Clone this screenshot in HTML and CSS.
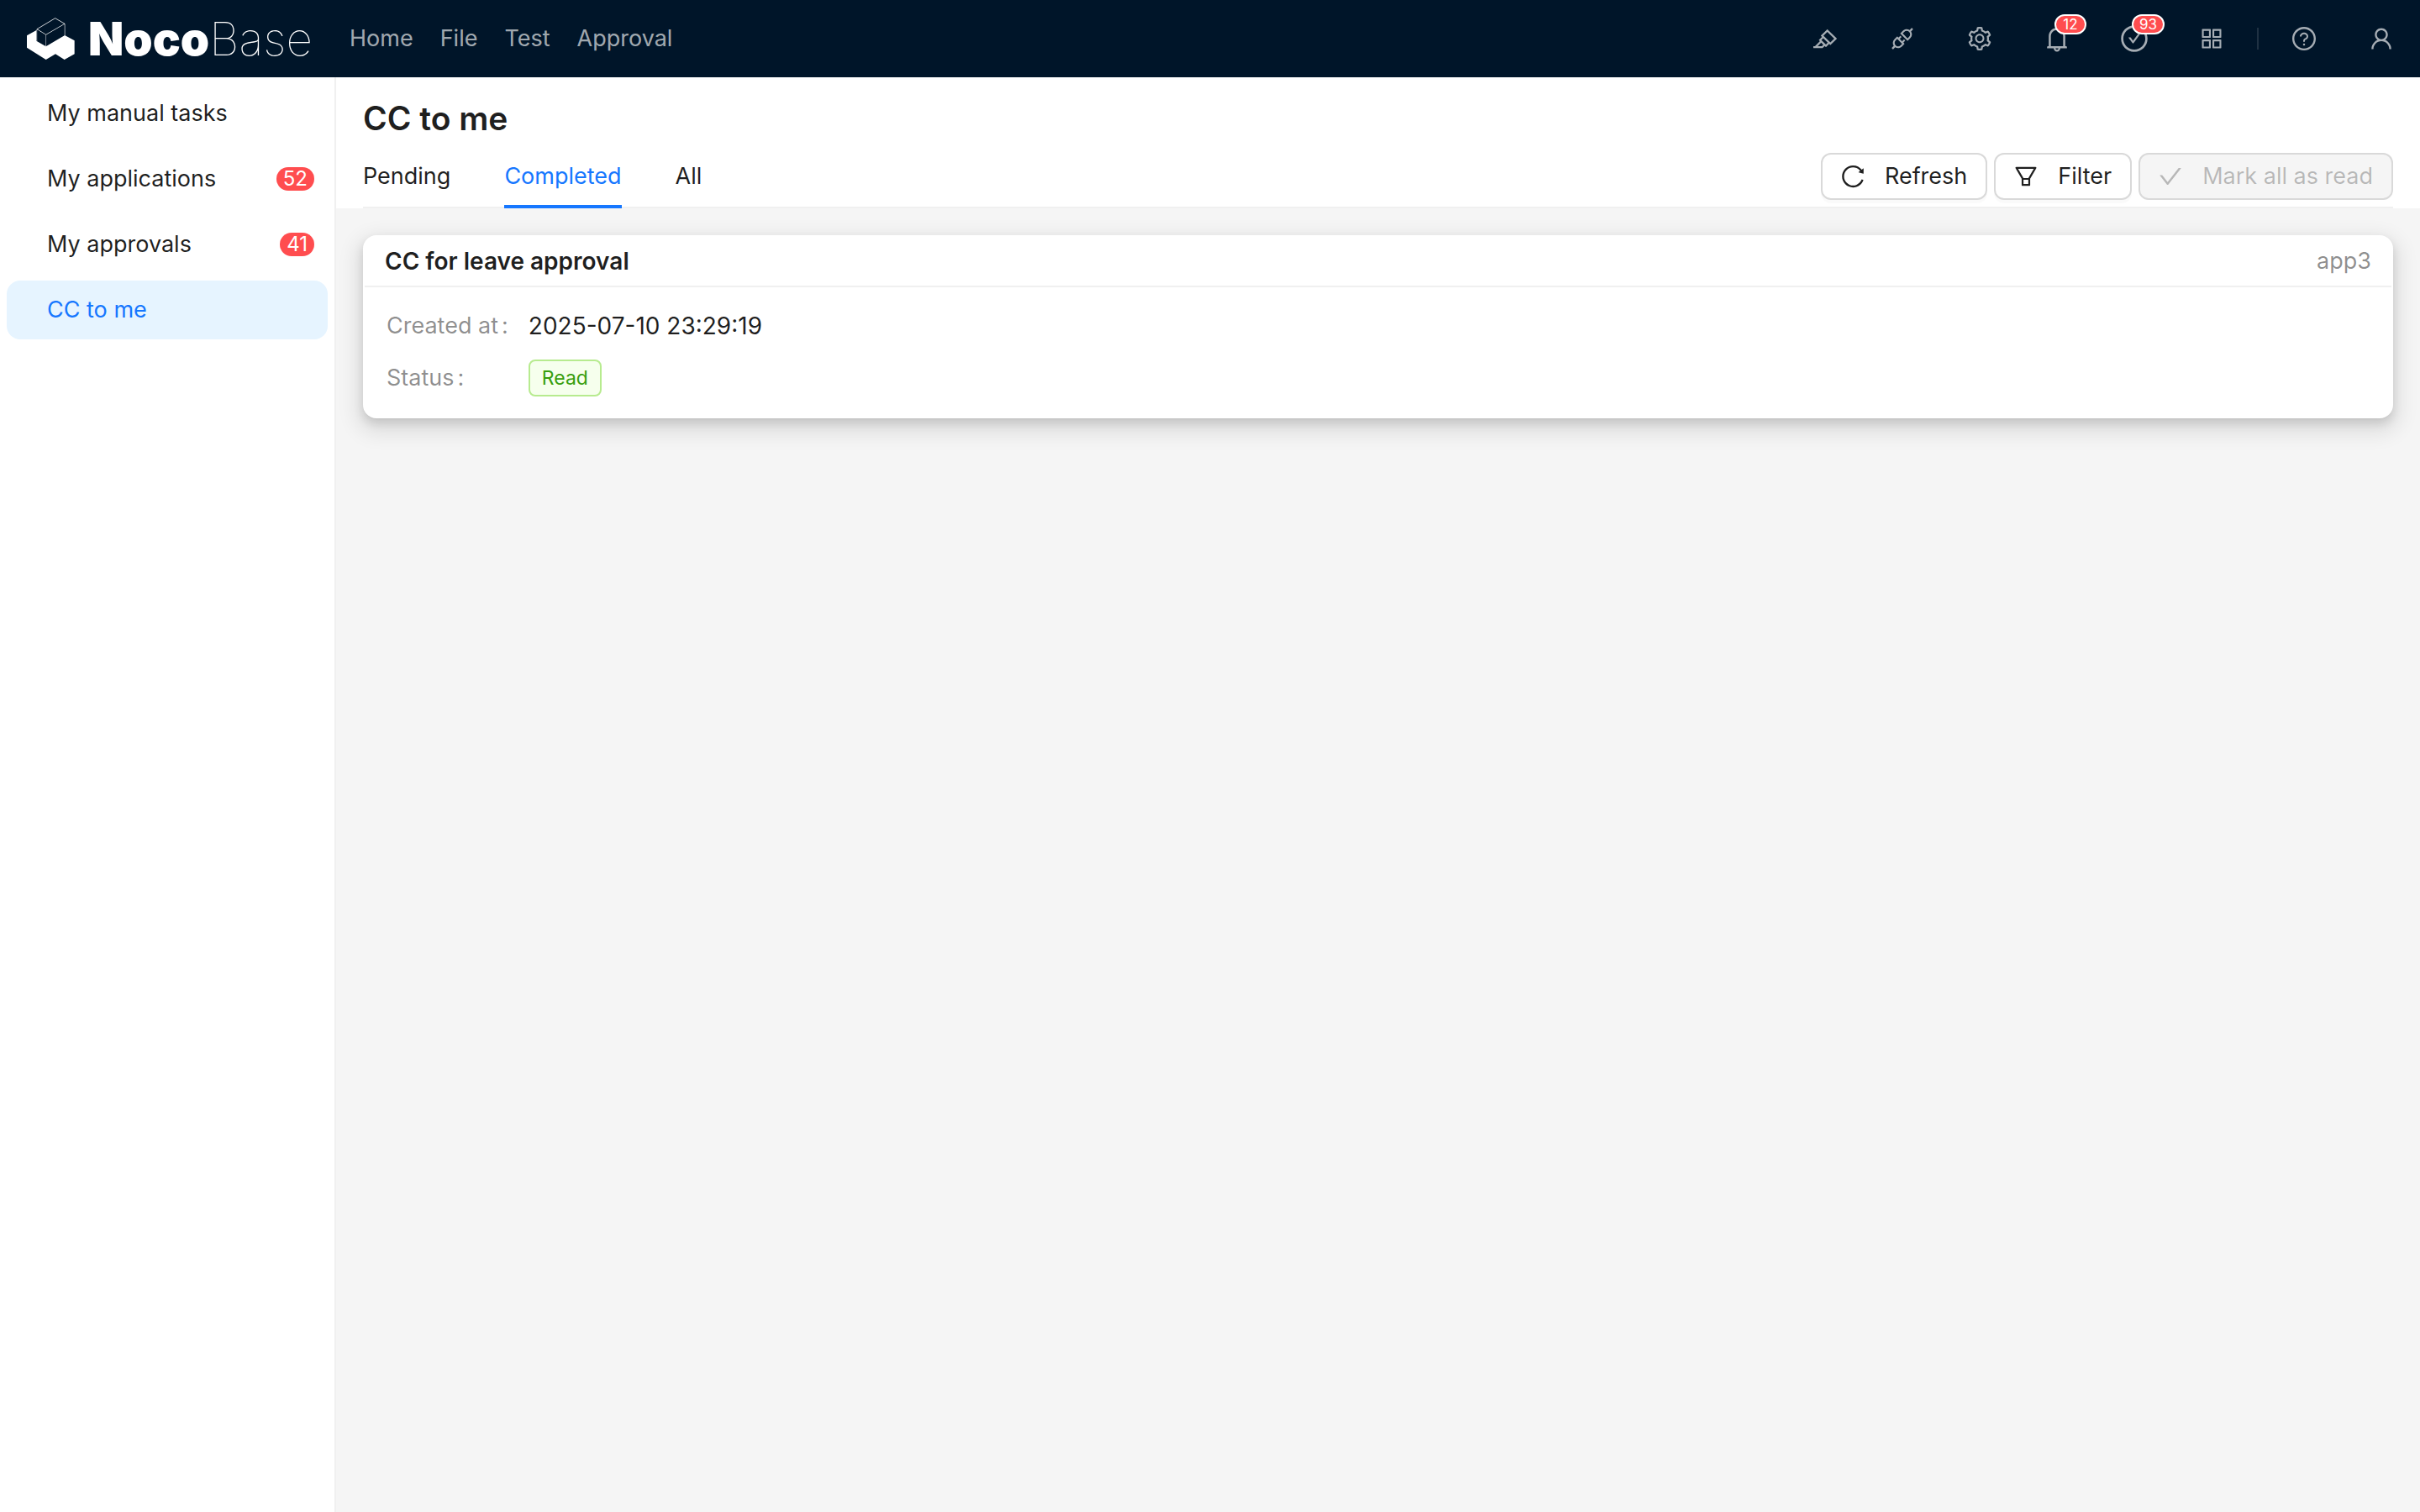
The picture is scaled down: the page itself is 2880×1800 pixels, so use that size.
FILE: index.html
```
<!DOCTYPE html>
<html lang="en">
<head>
    <meta charset="UTF-8">
    <meta name="viewport" content="width=device-width, initial-scale=1.0">
    <title>CC to me - NocoBase</title>
    <link rel="stylesheet" href="styles.css">
</head>
<body>
    <header class="header">
        <a class="logo" href="#">
            <svg class="logo-mark" viewBox="96 63 171 150">
                <path fill="#fff" d="M130 108L96 127v43l68 43 34-20 32 20 36-20v-48l-35-19-67 40-34-20z"/>
                <path fill="none" stroke="#fff" stroke-width="3" stroke-linejoin="round" d="M132 104l65-39 34 20v42M132 104l32 20 67-39M132 104v42M164 124v42" opacity=".8"/>
                <path fill="#001529" d="M133 107l30 18v38l-30-18zM165.500 125.500L229.500 88v38L165.500 163z"/>
            </svg>
            <span class="logo-text"><b>Noco</b><i>Base</i></span>
        </a>
        <nav class="nav">
            <a href="#">Home</a>
            <a href="#">File</a>
            <a href="#">Test</a>
            <a href="#">Approval</a>
        </nav>
        <div class="actions">
            <button type="button" aria-label="UI editor">
                <svg class="icon" viewBox="0 0 1024 1024"><path d="M957.6 507.4L603.2 158.2a7.9 7.9 0 00-11.2 0L353.3 393.4a8.03 8.03 0 00-.1 11.3l.1.1 40 39.4-117.2 115.3a8.03 8.03 0 00-.1 11.3l.1.1 39.5 38.9-189.1 187H72.1c-4.4 0-8.1 3.6-8.1 8V860c0 4.4 3.6 8 8 8h344.9c2.1 0 4.1-.8 5.6-2.3l76.1-75.6 40.4 39.8a7.9 7.9 0 0011.2 0l117.1-115.6 40.1 39.5a7.9 7.9 0 0011.2 0l238.7-235.2c3.4-3 3.4-8 .3-11.2zM389.8 796.2H229.6l134.4-133 80.1 78.9-54.3 54.1zm154.8-62.1L373.2 565.2l68.6-67.6 171.4 168.9-68.6 67.6zM713.1 658L450.3 399.1 597.6 254l262.8 259-147.3 145z"/></svg>
            </button>
            <button type="button" aria-label="Plugin manager">
                <svg class="icon" viewBox="0 0 1024 1024"><path d="M917.7 148.8l-42.4-42.4c-1.6-1.6-3.6-2.3-5.7-2.3s-4.1.8-5.7 2.3l-76.1 76.1a199.27 199.27 0 00-112.1-34.3c-51.2 0-102.4 19.5-141.5 58.6L432.3 308.7a8.03 8.03 0 000 11.3L704 591.7c1.6 1.6 3.6 2.3 5.7 2.3 2 0 4.1-.8 5.7-2.3l101.9-101.9c68.9-69 77-175.7 24.3-253.5l76.1-76.1c3.1-3.2 3.1-8.3 0-11.4zM769.1 441.7l-59.4 59.4-186.8-186.8 59.4-59.4c24.9-24.9 58.1-38.7 93.4-38.7 35.3 0 68.4 13.7 93.4 38.7 24.9 24.9 38.7 58.1 38.7 93.4 0 35.3-13.8 68.4-38.7 93.4zm-190.2 105a8.03 8.03 0 00-11.3 0L501 613.3 410.7 523l66.7-66.7c3.1-3.1 3.1-8.2 0-11.3L441 408.6a8.03 8.03 0 00-11.3 0L363 475.3l-43-43a7.85 7.85 0 00-5.7-2.3c-2 0-4.1.8-5.7 2.3L206.8 534.2c-68.9 69-77 175.7-24.3 253.5l-76.1 76.1a8.03 8.03 0 000 11.3l42.4 42.4c1.6 1.6 3.6 2.3 5.7 2.3s4.1-.8 5.7-2.3l76.1-76.1c33.7 22.9 72.9 34.3 112.1 34.3 51.2 0 102.4-19.5 141.5-58.6l101.9-101.9c3.1-3.1 3.1-8.2 0-11.3l-43-43 66.7-66.7c3.1-3.1 3.1-8.2 0-11.3l-36.6-36.2zM441.7 769.1a131.32 131.32 0 01-93.4 38.7c-35.3 0-68.4-13.7-93.4-38.7a131.32 131.32 0 01-38.7-93.4c0-35.3 13.7-68.4 38.7-93.4l59.4-59.4 186.8 186.8-59.4 59.4z"/></svg>
            </button>
            <button type="button" aria-label="Settings">
                <svg class="icon" viewBox="0 0 1024 1024"><path d="M924.8 625.7l-65.5-56c3.1-19 4.7-38.4 4.7-57.8s-1.6-38.8-4.7-57.8l65.5-56a32.03 32.03 0 009.3-35.2l-.9-2.6a443.74 443.74 0 00-79.7-137.9l-1.8-2.1a32.12 32.12 0 00-35.1-9.5l-81.3 28.9c-30-24.6-63.5-44-99.7-57.6l-15.7-85a32.05 32.05 0 00-25.8-25.7l-2.7-.5c-52.1-9.4-106.9-9.4-159 0l-2.7.5a32.05 32.05 0 00-25.8 25.7l-15.8 85.4a351.86 351.86 0 00-99 57.4l-81.9-29.1a32 32 0 00-35.1 9.5l-1.8 2.1a446.02 446.02 0 00-79.7 137.9l-.9 2.6c-4.5 12.5-.8 26.5 9.3 35.2l66.3 56.6c-3.1 18.8-4.6 38-4.6 57.1 0 19.2 1.5 38.4 4.6 57.1L99 625.5a32.03 32.03 0 00-9.3 35.2l.9 2.6c18.1 50.4 44.9 96.9 79.7 137.9l1.8 2.1a32.12 32.12 0 0035.1 9.5l81.9-29.1c29.8 24.5 63.1 43.9 99 57.4l15.8 85.4a32.05 32.05 0 0025.8 25.7l2.7.5a449.4 449.4 0 00159 0l2.7-.5a32.05 32.05 0 0025.8-25.7l15.7-85a350 350 0 0099.7-57.6l81.3 28.9a32 32 0 0035.1-9.5l1.8-2.1c34.8-41.1 61.6-87.5 79.7-137.9l.9-2.6c4.5-12.3.8-26.3-9.3-35zM788.3 465.9c2.5 15.1 3.8 30.6 3.8 46.1s-1.3 31-3.8 46.1l-6.6 40.1 74.7 63.9a370.03 370.03 0 01-42.6 73.6L721 702.8l-31.4 25.8c-23.9 19.6-50.5 35-79.3 45.8l-38.1 14.3-17.9 97a377.5 377.5 0 01-85 0l-17.9-97.2-37.8-14.5c-28.5-10.8-55-26.2-78.7-45.7l-31.4-25.9-93.4 33.2c-17-22.9-31.2-47.6-42.6-73.6l75.5-64.5-6.5-40c-2.4-14.9-3.7-30.3-3.7-45.5 0-15.3 1.2-30.6 3.7-45.5l6.5-40-75.500-64.500c11.3-26.1 25.6-50.7 42.6-73.6l93.4 33.2 31.4-25.9c23.7-19.5 50.2-34.9 78.7-45.7l37.9-14.3 17.9-97.2c28.1-3.2 56.8-3.2 85 0l17.9 97 38.1 14.3c28.7 10.8 55.4 26.2 79.3 45.8l31.4 25.8 92.8-32.9c17 22.9 31.2 47.6 42.6 73.6L781.8 426l6.5 39.9zM512 326c-97.2 0-176 78.8-176 176s78.8 176 176 176 176-78.8 176-176-78.8-176-176-176zm79.2 255.2A111.6 111.6 0 01512 614c-29.9 0-58-11.7-79.2-32.8A111.6 111.6 0 01400 502c0-29.9 11.7-58 32.8-79.2C454 401.6 482.1 390 512 390c29.9 0 58 11.6 79.2 32.8A111.6 111.6 0 01624 502c0 29.9-11.7 58-32.8 79.2z"/></svg>
            </button>
            <button type="button" aria-label="Notifications">
                <svg class="icon icon-lg" viewBox="0 0 1024 1024"><path d="M816 768h-24V428c0-141.1-104.3-257.7-240-277.1V112c0-22.1-17.9-40-40-40s-40 17.9-40 40v38.9c-135.7 19.4-240 136-240 277.1v340h-24c-17.7 0-32 14.3-32 32v32c0 4.4 3.6 8 8 8h216c0 61.8 50.2 112 112 112s112-50.2 112-112h216c4.4 0 8-3.6 8-8v-32c0-17.7-14.3-32-32-32zM512 888c-26.5 0-48-21.5-48-48h96c0 26.5-21.5 48-48 48zM304 768V428c0-55.6 21.6-107.8 60.9-147.1S456.4 220 512 220c55.6 0 107.8 21.6 147.1 60.9S720 372.4 720 428v340H304z"/></svg>
                <sup class="dot-count">12</sup>
            </button>
            <button type="button" aria-label="Tasks">
                <svg class="icon icon-lg" viewBox="0 0 1024 1024"><path d="M699 353h-46.9c-10.2 0-19.9 4.9-25.9 13.3L469 584.3l-71.2-98.8c-6-8.3-15.6-13.3-25.9-13.3H325c-6.5 0-10.3 7.4-6.5 12.7l124.6 172.8a31.8 31.8 0 0051.7 0l210.6-292c3.9-5.3.1-12.7-6.4-12.7z"/><path d="M512 64C264.6 64 64 264.6 64 512s200.6 448 448 448 448-200.6 448-448S759.4 64 512 64zm0 820c-205.4 0-372-166.6-372-372s166.6-372 372-372 372 166.6 372 372-166.6 372-372 372z"/></svg>
                <sup class="dot-count">93</sup>
            </button>
            <button type="button" aria-label="Apps">
                <svg class="icon" viewBox="0 0 1024 1024"><path d="M464 144H160c-8.8 0-16 7.2-16 16v304c0 8.8 7.2 16 16 16h304c8.8 0 16-7.2 16-16V160c0-8.8-7.2-16-16-16zm-52 268H212V212h200v200zm452-268H560c-8.8 0-16 7.2-16 16v304c0 8.8 7.2 16 16 16h304c8.8 0 16-7.2 16-16V160c0-8.8-7.2-16-16-16zm-52 268H612V212h200v200zM464 544H160c-8.8 0-16 7.2-16 16v304c0 8.8 7.2 16 16 16h304c8.8 0 16-7.2 16-16V560c0-8.8-7.2-16-16-16zm-52 268H212V612h200v200zm452-268H560c-8.8 0-16 7.2-16 16v304c0 8.8 7.2 16 16 16h304c8.8 0 16-7.2 16-16V560c0-8.8-7.2-16-16-16zm-52 268H612V612h200v200z"/></svg>
            </button>
            <span class="divider"></span>
            <button type="button" aria-label="Help">
                <svg class="icon" viewBox="0 0 1024 1024"><path d="M512 64C264.6 64 64 264.6 64 512s200.6 448 448 448 448-200.6 448-448S759.4 64 512 64zm0 820c-205.4 0-372-166.6-372-372s166.6-372 372-372 372 166.6 372 372-166.6 372-372 372z"/><path d="M623.6 316.7C593.6 290.4 554 276 512 276s-81.6 14.5-111.6 40.7C369.2 344 352 380.7 352 420v7.6c0 4.4 3.6 8 8 8h48c4.4 0 8-3.6 8-8V420c0-44.1 43.1-80 96-80s96 35.9 96 80c0 31.1-22 59.6-56.1 72.7-21.2 8.1-39.2 22.3-52.1 40.9-13.1 19-19.9 41.8-19.9 64.9V620c0 4.4 3.6 8 8 8h48c4.4 0 8-3.6 8-8v-22.7a48.3 48.3 0 0130.9-44.8c59-22.7 97.1-74.7 97.1-132.5.1-39.3-17.1-76-48.3-103.3zM472 732a40 40 0 1080 0 40 40 0 10-80 0z"/></svg>
            </button>
            <button type="button" aria-label="User">
                <svg class="icon" viewBox="0 0 1024 1024"><path d="M858.5 763.6a374 374 0 00-80.6-119.5 375.63 375.63 0 00-119.5-80.6c-.4-.2-.8-.3-1.2-.5C719.5 518 760 444.7 760 362c0-137-111-248-248-248S264 225 264 362c0 82.7 40.5 156 102.8 201.1-.4.2-.8.3-1.2.5-44.8 18.9-85 46-119.5 80.6a375.63 375.63 0 00-80.6 119.5A371.7 371.7 0 00136 901.8a8 8 0 008 8.2h60c4.4 0 7.9-3.5 8-7.8 2-77.2 33-149.5 87.8-204.3 56.7-56.7 132-87.9 212.2-87.9s155.5 31.2 212.2 87.9C779 752.7 810 825 812 902.2c.1 4.4 3.6 7.8 8 7.8h60a8 8 0 008-8.2c-1-47.8-10.9-94.3-29.5-138.2zM512 534c-45.9 0-89.1-17.9-121.6-50.4S340 407.9 340 362c0-45.9 17.9-89.1 50.4-121.6S466.1 190 512 190s89.1 17.9 121.6 50.4S684 316.1 684 362c0 45.9-17.9 89.1-50.4 121.6S557.9 534 512 534z"/></svg>
            </button>
        </div>
    </header>
    <div class="layout">
        <aside class="sidebar">
            <a class="menu-item" href="#">My manual tasks</a>
            <a class="menu-item" href="#">My applications <span class="badge">52</span></a>
            <a class="menu-item" href="#">My approvals <span class="badge">41</span></a>
            <a class="menu-item active" href="#">CC to me</a>
        </aside>
        <main class="main">
            <div class="page-header">
                <h1>CC to me</h1>
                <div class="toolbar">
                    <nav class="tabs">
                        <a class="tab" href="#">Pending</a>
                        <a class="tab active" href="#">Completed</a>
                        <a class="tab" href="#">All</a>
                    </nav>
                    <div class="buttons">
                        <button class="btn" type="button">
                            <svg class="icon" viewBox="0 0 1024 1024"><path d="M909.1 209.3l-56.4 44.1C775.8 155.1 656.2 92 521.9 92 290 92 102.3 279.5 102 511.5 101.7 743.7 289.8 932 521.9 932c181.3 0 335.8-115 394.6-276.1 1.5-4.2-.7-8.9-4.9-10.3l-56.7-19.5a8 8 0 00-10.1 4.8c-1.8 5-3.8 10-5.9 14.9-17.3 41-42.1 77.8-73.7 109.4A344.77 344.77 0 01655.9 829c-42.3 17.9-87.4 27-133.8 27-46.5 0-91.5-9.1-133.8-27A341.5 341.5 0 01279 755.2a342.16 342.16 0 01-73.7-109.4c-17.9-42.4-27-87.4-27-133.9s9.1-91.5 27-133.9c17.3-41 42.1-77.8 73.7-109.4 31.6-31.6 68.4-56.4 109.3-73.8 42.3-17.9 87.4-27 133.8-27 46.5 0 91.5 9.1 133.8 27a341.5 341.5 0 01109.3 73.8c9.9 9.9 19.2 20.4 27.8 31.4l-60.2 47a8 8 0 003 14.1l175.6 43c5 1.2 9.9-2.6 9.9-7.7l.8-180.9c-.1-6.6-7.8-10.3-13-6.2z"/></svg>
                            Refresh
                        </button>
                        <button class="btn" type="button">
                            <svg class="icon" viewBox="0 0 1024 1024"><path d="M880.1 154H143.9c-24.5 0-39.8 26.7-27.5 48L349 597.4V838c0 17.7 14.2 32 31.8 32h262.4c17.6 0 31.8-14.3 31.8-32V597.4L907.7 202c12.2-21.3-3.1-48-27.6-48zM603.4 798H420.6V642h182.9v156zm9.6-236.6l-9.5 16.6h-183l-9.5-16.6L212.7 226h598.6L613 561.4z"/></svg>
                            Filter
                        </button>
                        <button class="btn" type="button" disabled>
                            <svg class="icon" viewBox="0 0 1024 1024"><path d="M912 190h-69.9c-9.8 0-19.1 4.5-25.1 12.2L404.7 724.5 207 474a32 32 0 00-25.1-12.2H112c-6.7 0-10.4 7.7-6.3 12.9l273.9 347c12.8 16.2 37.4 16.2 50.3 0l488.4-618.9c4.1-5.1.4-12.8-6.3-12.8z"/></svg>
                            Mark all as read
                        </button>
                    </div>
                </div>
            </div>
            <section class="card">
                <div class="card-head">
                    <h2>CC for leave approval</h2>
                    <span class="extra">app3</span>
                </div>
                <dl class="card-body">
                    <dt>Created at</dt>
                    <dd>2025-07-10 23:29:19</dd>
                    <dt>Status</dt>
                    <dd><span class="tag">Read</span></dd>
                </dl>
            </section>
        </main>
    </div>
</body>
</html>
```
FILE: styles.css
```
*{
    box-sizing: border-box;
    padding: 0;
    margin: 0;
}
body{
    display: flex;
    flex-direction: column;
    min-height: 100vh;
    font-family: Inter, "Liberation Sans", sans-serif;
    font-size: 27px;
    line-height: 44px;
    color: rgba(0, 0, 0, 0.88);
    background: #f5f5f5;
}
a{
    color: inherit;
    text-decoration: none;
}
button{
    font: inherit;
    cursor: pointer;
}
.icon{
    display: block;
    width: 32px;
    height: 32px;
    fill: currentColor;
}
.icon-lg{
    width: 36px;
    height: 36px;
}

/* top bar */
.header{
    display: flex;
    align-items: center;
    height: 92px;
    padding-left: 32px;
    background: #001529;
    color: rgba(255, 255, 255, 0.65);
}
.logo{
    display: flex;
    align-items: center;
    gap: 16px;
    width: 384px;
    color: #fff;
}
.logo-mark{
    width: 57px;
    height: 50px;
}
.logo-text{
    font-size: 55px;
    line-height: 92px;
}
.logo-text b{
    font-weight: 900;
}
.logo-text i{
    font-style: normal;
    font-weight: 100;
}
.nav{
    display: flex;
    gap: 32px;
}
.actions{
    display: flex;
    align-items: center;
    margin-left: auto;
}
.actions button{
    position: relative;
    display: flex;
    align-items: center;
    justify-content: center;
    width: 92px;
    height: 92px;
    border: none;
    background: none;
    color: inherit;
}
.dot-count{
    position: absolute;
    top: 17px;
    left: 43px;
    min-width: 38px;
    height: 24px;
    padding: 0 7px;
    border: 2px solid #fff;
    border-radius: 12px;
    background: #ff4d4f;
    color: #fff;
    font-size: 17px;
    line-height: 20px;
    text-align: center;
}
.divider{
    width: 2px;
    height: 26px;
    margin: 0 8px;
    background: rgba(255, 255, 255, 0.12);
}

/* left menu */
.layout{
    display: flex;
    flex: 1;
}
.sidebar{
    display: flex;
    flex-direction: column;
    gap: 8px;
    width: 400px;
    padding: 8px;
    border-right: 2px solid #f0f0f0;
    background: #fff;
}
.menu-item{
    display: flex;
    align-items: center;
    justify-content: space-between;
    height: 70px;
    padding: 0 16px 0 48px;
    border-radius: 16px;
}
.menu-item.active{
    background: #e6f4ff;
    color: #1677ff;
}
.badge{
    padding: 0 8px;
    border-radius: 14px;
    background: #ff4d4f;
    color: #fff;
    font-size: 24px;
    line-height: 28px;
}

/* content */
.main{
    flex: 1;
}
.page-header{
    padding: 20px 32px 0;
    background: #fff;
}
.page-header h1{
    font-size: 39px;
    font-weight: 600;
    line-height: 58px;
}
.toolbar{
    display: flex;
    justify-content: space-between;
    height: 78px;
    border-bottom: 2px solid #f0f0f0;
}
.tabs{
    display: flex;
    gap: 64px;
    height: 78px;
}
.tab{
    line-height: 80px;
}
.tab.active{
    border-bottom: 4px solid #1677ff;
    color: #1677ff;
}
.buttons{
    display: flex;
    align-items: center;
    gap: 8px;
    padding-top: 4px;
}
.btn{
    display: flex;
    align-items: center;
    gap: 22px;
    height: 56px;
    padding: 0 22px 0 20px;
    border: 2px solid #d9d9d9;
    border-radius: 12px;
    background: #fff;
    color: rgba(0, 0, 0, 0.88);
    box-shadow: 0 4px 0 rgba(0, 0, 0, 0.02);
}
.btn:disabled{
    background: #f5f5f5;
    color: rgba(0, 0, 0, 0.25);
    box-shadow: none;
    cursor: not-allowed;
}
.card{
    margin: 32px;
    border: 2px solid #fff;
    border-radius: 16px;
    background: #fff;
    box-shadow: 0 2px 4px -4px rgba(0, 0, 0, 0.16), 0 6px 12px 0 rgba(0, 0, 0, 0.12), 0 10px 24px 8px rgba(0, 0, 0, 0.09);
}
.card-head{
    display: flex;
    justify-content: space-between;
    align-items: center;
    height: 60px;
    padding: 0 24px;
    border-bottom: 2px solid #f0f0f0;
}
.card-head h2{
    font-size: 28px;
    font-weight: 600;
}
.extra{
    color: rgba(0, 0, 0, 0.45);
}
.card-body{
    display: grid;
    grid-template-columns: auto 1fr;
    column-gap: 24px;
    row-gap: 18px;
    padding: 24px 26px;
}
.card-body dt{
    color: rgba(0, 0, 0, 0.45);
}
.card-body dt::after{
    content: ":";
    margin-left: 4px;
}
.card-body dd{
    font-size: 28px;
}
.tag{
    display: inline-block;
    padding: 0 14px;
    border: 2px solid #b7eb8f;
    border-radius: 8px;
    background: #f6ffed;
    color: #389e0d;
    font-size: 23px;
    line-height: 40px;
    vertical-align: top;
}
```
